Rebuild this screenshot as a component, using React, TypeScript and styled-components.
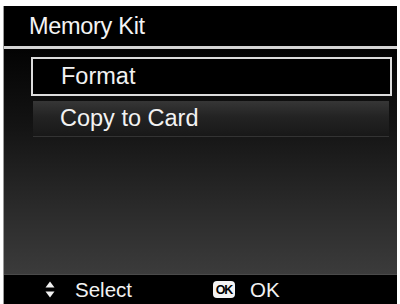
import React from 'react';
import styled, {createGlobalStyle} from 'styled-components';

const Global = createGlobalStyle`
  html, body {
    margin: 0;
    padding: 0;
    background: #fff;
  }
  body {
    font-family: "Liberation Sans", Arial, sans-serif;
  }
`

const Screen = styled.div`
  margin: 6px 3px 0 3px;
  height: 298px;
  display: flex;
  flex-direction: column;
  background: #000;
  border-left: 1px solid #9a9a9a;
  box-sizing: border-box;
  overflow: hidden;
`
const Header = styled.div`
  height: 40px;
  display: flex;
  align-items: center;
  padding-left: 25px;
  background: #000;
  color: #f4f4f4;
  font-size: 23.5px;
  letter-spacing: -0.3px;
`
const Divider = styled.div`
  height: 3px;
  background: #d4d4d4;
`
const Body = styled.div`
  flex: 1;
  display: flex;
  flex-direction: column;
  gap: 5px;
  padding: 8px 5px 0 27px;
  background: linear-gradient(to bottom, #030303 0%, #141414 35%, #2a2a2a 70%, #3b3b3b 100%);
  border-bottom: 1px solid #4a4a4a;
`
const Item = styled.div<{$active?: boolean}>`
  height: ${p => (p.$active ? '39px' : '36px')};
  box-sizing: border-box;
  display: flex;
  align-items: center;
  color: #f2f2f2;
  font-size: 23.5px;
  ${p => p.$active
    ? `
      border: 2px solid #dcdcdc;
      background: #000;
      padding-left: 28px;
    `
    : `
      margin: 0 3px 0 2px;
      padding-left: 27px;
      background: linear-gradient(to bottom, #363636 0%, #232323 45%, #181818 100%);
      border-bottom: 1px solid #333;
    `}
`
const Footer = styled.div`
  height: 29px;
  display: flex;
  align-items: center;
  padding-left: 41px;
  background: #000;
  color: #f2f2f2;
  font-size: 20.5px;
`
const Hint = styled.div<{$width?: number}>`
  display: flex;
  align-items: center;
  gap: ${p => (p.$width ? 20 : 15)}px;
  width: ${p => (p.$width ? `${p.$width}px` : 'auto')};
`
const OkKey = styled.span`
  width: 22px;
  height: 17px;
  border-radius: 4px;
  background: #f4f4f4;
  color: #000;
  font-size: 12.5px;
  font-weight: bold;
  display: flex;
  align-items: center;
  justify-content: center;
  letter-spacing: -1px;
`

const UpDown = () => (
  <svg width="10" height="17" viewBox="0 0 10 17">
    <polygon points="5,0.5 9.5,6.5 0.5,6.5" fill="#f0f0f0"/>
    <polygon points="0.5,10.5 9.5,10.5 5,16.5" fill="#f0f0f0"/>
  </svg>
)

const App = () => {
  return (
    <>
      <Global/>
      <Screen>
        <Header>Memory Kit</Header>
        <Divider/>
        <Body>
          <Item $active>Format</Item>
          <Item>Copy to Card</Item>
        </Body>
        <Footer>
          <Hint $width={168}>
            <UpDown/>
            <span>Select</span>
          </Hint>
          <Hint>
            <OkKey>OK</OkKey>
            <span>OK</span>
          </Hint>
        </Footer>
      </Screen>
    </>
  );
};
export default App;
